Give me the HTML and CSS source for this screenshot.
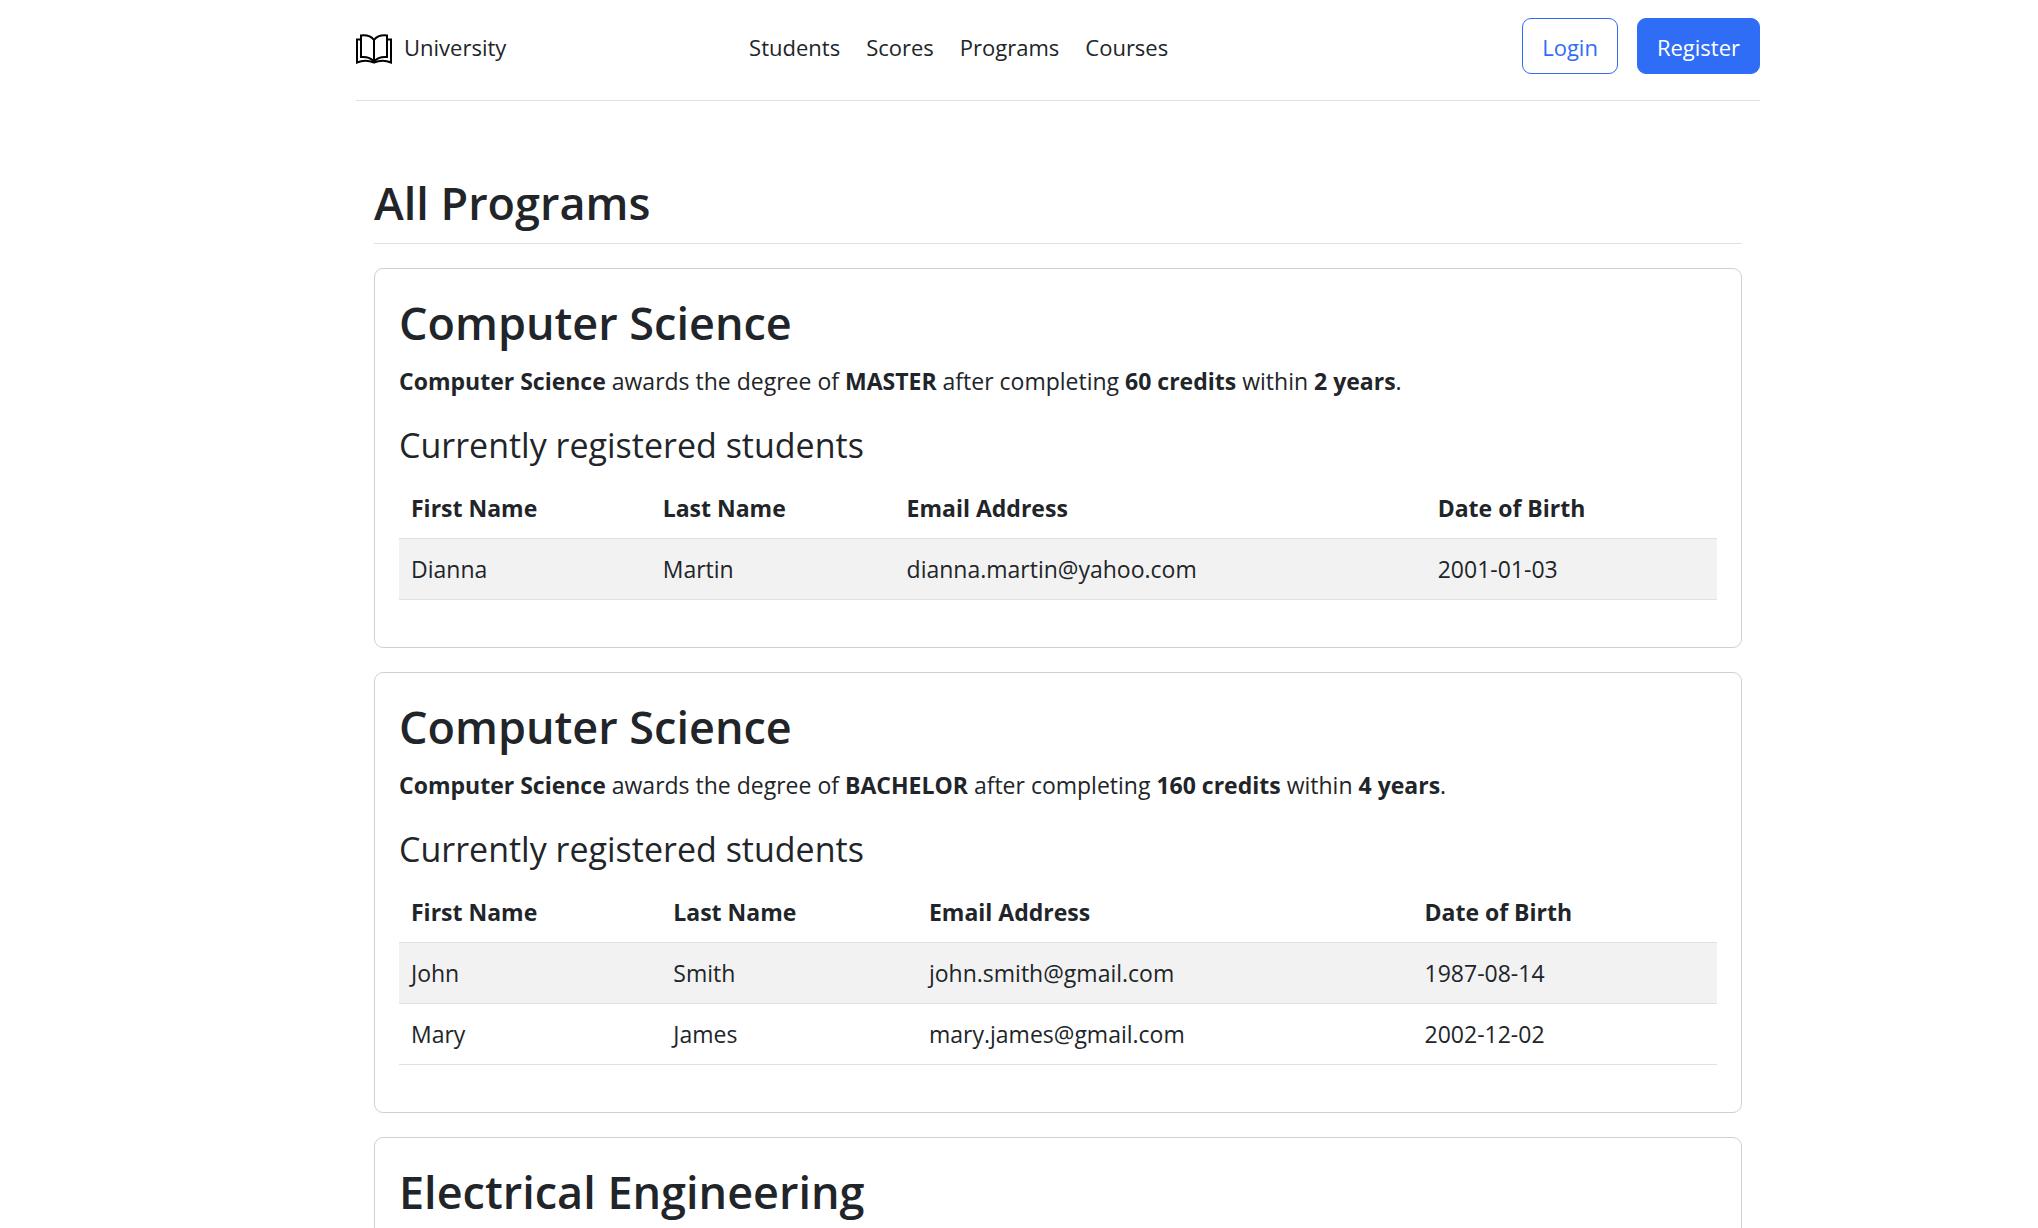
FILE: index.html
```html
<!DOCTYPE html>
<html lang="en">
<head>
<meta charset="utf-8">
<meta name="viewport" content="width=device-width, initial-scale=1">
<title>University - Programs</title>
<link rel="stylesheet" href="styles.css">
</head>
<body>
<div class="container">
  <header class="site-header">
    <a class="brand" href="#">
      <svg class="brand-icon" viewBox="0 0 36 30" fill="none" stroke="currentColor" stroke-width="2" aria-hidden="true">
        <path d="M5 5.500H1V28.500C7 26 13 26.500 18 28.500C23 26.500 29 26 35 28.500V5.500H31"/>
        <path d="M18 6C15 2 10 1 5 1.500V23C10 22.500 15 24 18 27.500C21 24 26 22.500 31 23V1.500C26 1 21 2 18 6Z"/>
        <path d="M18 5.500V28"/>
      </svg>
      <span>University</span>
    </a>
    <nav class="nav">
      <a href="#">Students</a>
      <a href="#">Scores</a>
      <a href="#">Programs</a>
      <a href="#">Courses</a>
    </nav>
    <div class="actions">
      <button type="button" class="btn btn-outline">Login</button>
      <button type="button" class="btn btn-solid">Register</button>
    </div>
  </header>
  <main class="content">
    <h1 class="page-title">All Programs</h1>
    <section class="card">
      <h2 class="title">Computer Science</h2>
      <p class="summary"><strong>Computer Science</strong> awards the degree of <strong>MASTER</strong> after completing <strong>60 credits</strong> within <strong>2 years</strong>.</p>
      <h3 class="subtitle">Currently registered students</h3>
      <table class="students master">
        <thead>
          <tr><th scope="col" class="first">First Name</th><th scope="col" class="last">Last Name</th><th scope="col" class="email">Email Address</th><th scope="col">Date of Birth</th></tr>
        </thead>
        <tbody>
          <tr><td>Dianna</td><td>Martin</td><td>dianna.martin@yahoo.com</td><td>2001-01-03</td></tr>
        </tbody>
      </table>
    </section>
    <section class="card">
      <h2 class="title">Computer Science</h2>
      <p class="summary"><strong>Computer Science</strong> awards the degree of <strong>BACHELOR</strong> after completing <strong>160 credits</strong> within <strong>4 years</strong>.</p>
      <h3 class="subtitle">Currently registered students</h3>
      <table class="students bachelor">
        <thead>
          <tr><th scope="col" class="first">First Name</th><th scope="col" class="last">Last Name</th><th scope="col" class="email">Email Address</th><th scope="col">Date of Birth</th></tr>
        </thead>
        <tbody>
          <tr><td>John</td><td>Smith</td><td>john.smith@gmail.com</td><td>1987-08-14</td></tr>
          <tr><td>Mary</td><td>James</td><td>mary.james@gmail.com</td><td>2002-12-02</td></tr>
        </tbody>
      </table>
    </section>
    <section class="card">
      <h2 class="title">Electrical Engineering</h2>
    </section>
  </main>
</div>
</body>
</html>
```
FILE: styles.css
```css
* { box-sizing: border-box; }

body {
  margin: 0;
  padding-left: 78px;
  background: #fff;
  color: #212529;
  font-family: "Open Sans", "Noto Sans", sans-serif;
  font-size: 23px;
  line-height: 36px;
}

.container {
  max-width: 1404px;
  margin: 0 auto;
}

.site-header {
  display: grid;
  grid-template-columns: 28% 1fr auto;
  align-items: center;
  padding: 18px 0 26px;
  border-bottom: 1px solid #dee2e6;
  font-size: 22px;
}

.brand {
  display: flex;
  align-items: center;
  gap: 12px;
  padding-top: 2px;
  color: #212529;
  text-decoration: none;
}

.brand-icon {
  width: 36px;
  height: 30px;
  margin-top: 4px;
  color: #000;
}

.nav {
  display: flex;
  gap: 26px;
  padding-top: 2px;
}

.nav a {
  color: #212529;
  text-decoration: none;
}

.actions {
  display: flex;
  gap: 19px;
}

.btn {
  padding: 10px 19px 8px;
  border: 1px solid #2f6df6;
  border-radius: 9px;
  font: inherit;
}

.btn-outline {
  background: #fff;
  color: #2f6df6;
}

.btn-solid {
  background: #2f6df6;
  color: #fff;
}

.content { padding: 72px 18px 0; }

.page-title,
.title {
  margin: 0;
  font-size: 45px;
  font-weight: 600;
  line-height: 60px;
}

.page-title {
  margin-bottom: 24px;
  padding-bottom: 10px;
  border-bottom: 1px solid #dee2e6;
}

.card {
  margin-bottom: 24px;
  padding: 24px;
  border: 1px solid #ced0d2;
  border-radius: 9px;
}

.title { margin-bottom: 10px; }

.summary { margin: 0 0 24px; }

.subtitle {
  margin: 0 0 10px;
  font-size: 34px;
  font-weight: 400;
  line-height: 45px;
}

.students {
  width: 100%;
  margin-bottom: 23px;
  border-collapse: separate;
  border-spacing: 0;
  table-layout: fixed;
}

.students th,
.students td {
  padding: 12px;
  border-bottom: 1px solid #dee2e6;
  text-align: left;
}

.students tbody tr:nth-child(odd) { background: #f2f2f2; }

.master .first { width: 19.1%; }
.master .last { width: 18.5%; }
.master .email { width: 40.3%; }
.bachelor .first { width: 19.9%; }
.bachelor .last { width: 19.4%; }
.bachelor .email { width: 37.6%; }
```
